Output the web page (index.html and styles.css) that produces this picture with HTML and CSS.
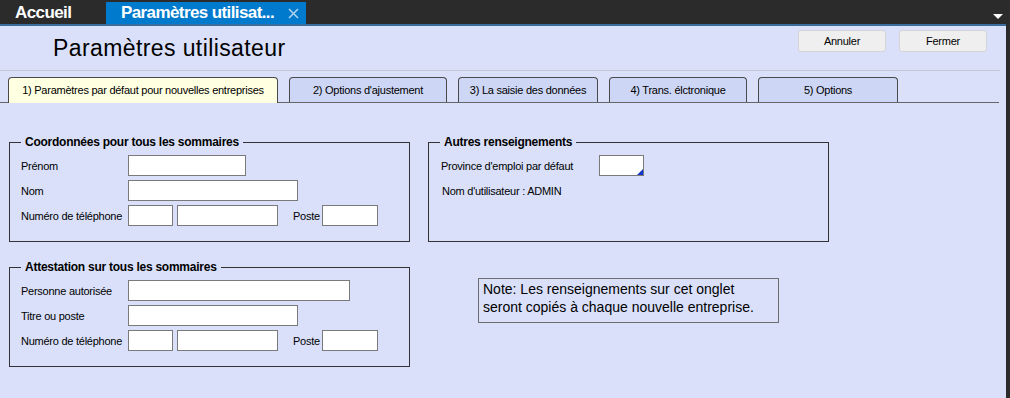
FILE: index.html
```html
<!DOCTYPE html>
<html lang="fr">
<head>
  <meta charset="UTF-8" />
  <title>Paramètres utilisateur</title>
  <link rel="stylesheet" href="styles.css">
</head>
<body>
  <div class="topbar">
    <div class="doc-tab">Accueil</div>
    <div class="doc-tab active">
      Paramètres utilisat...
      <svg class="close" width="11" height="11" viewBox="0 0 11 11"><path d="M1 1L10 10M10 1L1 10" stroke="#b4d3ee" stroke-width="1.5"/></svg>
    </div>
    <span class="menu-arrow"></span>
  </div>

  <div class="window">
    <div class="header">
      <h1>Paramètres utilisateur</h1>
      <div class="actions">
        <button class="btn">Annuler</button>
        <button class="btn">Fermer</button>
      </div>
    </div>

    <div class="tabs">
      <div class="tab active t1">1) Paramètres par défaut pour nouvelles entreprises</div>
      <div class="tab t2">2) Options d'ajustement</div>
      <div class="tab t3">3) La saisie des données</div>
      <div class="tab t4">4) Trans. élctronique</div>
      <div class="tab t5">5) Options</div>
    </div>

    <div class="panel">
      <fieldset class="group">
        <legend>Coordonnées pour tous les sommaires</legend>
        <div class="field"><label>Prénom</label><input class="w-118" type="text"></div>
        <div class="field"><label>Nom</label><input class="w-170" type="text"></div>
        <div class="field">
          <label>Numéro de téléphone</label>
          <input class="w-45" type="text">
          <input class="w-101" type="text">
          <span class="poste">Poste</span>
          <input class="w-56" type="text">
        </div>
      </fieldset>

      <fieldset class="group">
        <legend>Autres renseignements</legend>
        <div class="field">
          <label class="wide">Province d'emploi par défaut</label>
          <span class="combo"></span>
        </div>
        <div class="field"><span class="user">Nom d'utilisateur : ADMIN</span></div>
      </fieldset>

      <fieldset class="group">
        <legend>Attestation sur tous les sommaires</legend>
        <div class="field"><label>Personne autorisée</label><input class="w-222" type="text"></div>
        <div class="field"><label>Titre ou poste</label><input class="w-170" type="text"></div>
        <div class="field">
          <label>Numéro de téléphone</label>
          <input class="w-45" type="text">
          <input class="w-101" type="text">
          <span class="poste">Poste</span>
          <input class="w-56" type="text">
        </div>
      </fieldset>

      <div class="note">Note: Les renseignements sur cet onglet<br>seront copiés à chaque nouvelle entreprise.</div>
    </div>
  </div>
</body>
</html>
```

FILE: styles.css
```css
* {
  box-sizing: border-box;
}

body {
  margin: 0;
  width: 1010px;
  height: 398px;
  overflow: hidden;
  background: #2b2b2b;
  font-family: "Liberation Sans", Arial, sans-serif;
  color: #000;
}

/* top document bar */
.topbar {
  height: 24px;
  display: flex;
  align-items: flex-end;
}

.doc-tab {
  height: 22px;
  line-height: 22px;
  width: 106px;
  padding-left: 15px;
  color: #fff;
  font-weight: bold;
  font-size: 17px;
  letter-spacing: -0.6px;
}

.doc-tab.active {
  width: 200px;
  background: #007acc;
  display: flex;
  align-items: center;
}

.close {
  margin-left: 14px;
}

.menu-arrow {
  margin-left: auto;
  margin-right: 7px;
  align-self: center;
  margin-top: 8px;
  width: 0;
  height: 0;
  border-left: 5px solid transparent;
  border-right: 5px solid transparent;
  border-top: 5px solid #fff;
}

/* window */
.window {
  width: 1006px;
  height: 374px;
  background: #dae0fa;
  border-top: 2px solid #3b6e9c;
}

.header {
  height: 45px;
  margin-right: 6px;
  padding: 4px 13px 0 53px;
  border-bottom: 1px solid #c3c7d8;
  display: flex;
  justify-content: space-between;
  align-items: flex-start;
}

h1 {
  margin: 4px 0 0;
  font-size: 23px;
  font-weight: normal;
  letter-spacing: 0.4px;
  line-height: 28px;
}

.actions {
  display: flex;
  gap: 13px;
}

.btn {
  width: 88px;
  height: 22px;
  padding: 0;
  background: #efefef;
  border: 1px solid #d4d4d8;
  border-radius: 3px;
  font-family: inherit;
  font-size: 11px;
  letter-spacing: -0.25px;
  color: #000;
}

/* tabs */
.tabs {
  display: flex;
  gap: 11px;
  padding: 6px 0 0 8px;
  margin-right: 7px;
  border-bottom: 1px solid #666;
}

.tab {
  height: 25px;
  line-height: 24px;
  text-align: center;
  background: #cdd6f5;
  border: 1px solid #4a4a4a;
  border-bottom: none;
  border-radius: 4px 4px 0 0;
  font-size: 11px;
  letter-spacing: -0.25px;
}

.tab.active {
  height: 26px;
  margin-bottom: -1px;
  background: #ffffe1;
}

.t1 { width: 270px; }
.t2 { width: 158px; }
.t3 { width: 140px; }
.t4 { width: 138px; }
.t5 { width: 140px; }

/* panel */
.panel {
  display: grid;
  grid-template-columns: 401px 401px;
  column-gap: 18px;
  row-gap: 18px;
  padding: 32px 0 0 9px;
  align-items: start;
}

.group {
  margin: 0;
  min-width: 0;
  border: 1px solid #333;
  padding: 6px 11px 15px;
  display: flex;
  flex-direction: column;
  gap: 4px;
  height: 107px;
}

.group legend {
  padding: 0 4px;
  font-size: 12px;
  font-weight: bold;
  line-height: 14px;
  letter-spacing: -0.25px;
}

.field {
  height: 21px;
  display: flex;
  align-items: center;
  font-size: 11px;
  letter-spacing: -0.25px;
}

.field label {
  width: 107px;
}

.field label.wide {
  width: 159px;
  padding-left: 1px;
}

.field input,
.combo {
  height: 21px;
  margin: 0;
  padding: 0;
  background: #fff;
  border: 1px solid #7a7a7a;
}

.w-45 { width: 45px; }
.w-101 { width: 101px; margin-left: 4px !important; }
.w-56 { width: 56px; }
.w-118 { width: 118px; }
.w-170 { width: 170px; }
.w-222 { width: 222px; }

.poste {
  width: 44px;
  padding-left: 15px;
}

.combo {
  width: 45px;
  position: relative;
}

.combo::after {
  content: "";
  position: absolute;
  right: 0;
  bottom: 0;
  border-left: 6px solid transparent;
  border-bottom: 6px solid #1436c8;
}

.user {
  padding-left: 2px;
}

.note {
  grid-column: 2;
  justify-self: start;
  margin: 18px 0 0 50px;
  width: 301px;
  height: 45px;
  padding: 1px 0 0 4px;
  border: 1px solid #6e6e6e;
  font-size: 14px;
  line-height: 18px;
}
```
